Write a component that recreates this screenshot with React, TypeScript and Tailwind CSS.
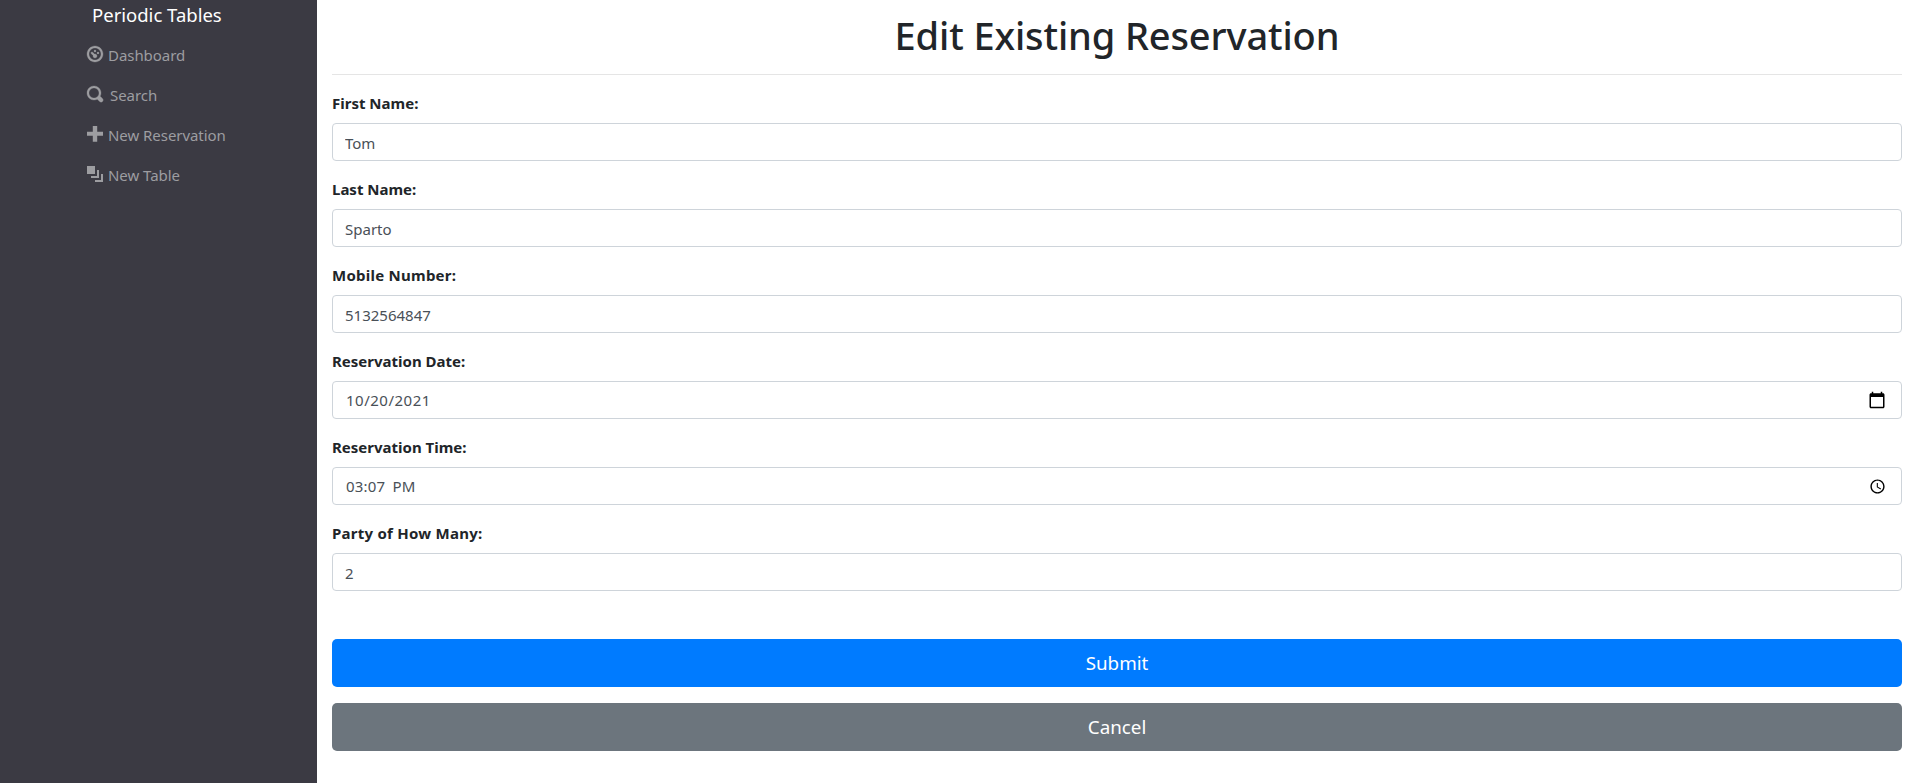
import React from "react";

const navItems = [
  {
    label: "Dashboard",
    gap: "gap-[5px]",
    stroke: "stroke-current [stroke-width:0.15]",
    path: "M4 0c-2.2 0-4 1.8-4 4s1.8 4 4 4 4-1.8 4-4-1.8-4-4-4zm0 1c1.66 0 3 1.34 3 3s-1.34 3-3 3-3-1.34-3-3 1.34-3 3-3zm0 1c-.28 0-.5.22-.5.5s.22.5.5.5.5-.22.5-.5-.22-.5-.5-.5zm-1.66 1a.5.5 0 0 0-.19.84l.91.91c-.02.08-.06.16-.06.25 0 .55.45 1 1 1s1-.45 1-1-.45-1-1-1c-.09 0-.17.04-.25.06l-.91-.91a.5.5 0 0 0-.44-.16.5.5 0 0 0-.06 0zm3.16 0c-.28 0-.5.22-.5.5s.22.5.5.5.5-.22.5-.5-.22-.5-.5-.5z",
  },
  {
    label: "Search",
    gap: "gap-[7px]",
    stroke: "stroke-current [stroke-width:0.15]",
    path: "M3.5 0c-1.93 0-3.5 1.57-3.5 3.5s1.57 3.5 3.5 3.5c.59 0 1.17-.14 1.66-.41a1 1 0 0 0 .13.13l1 1a1.02 1.02 0 1 0 1.44-1.44l-1-1a1 1 0 0 0-.16-.13c.27-.49.44-1.06.44-1.66 0-1.93-1.55-3.5-3.5-3.5zm0 1c1.39 0 2.5 1.11 2.5 2.5 0 .66-.24 1.27-.66 1.72-.01.01-.02.02-.03.03a1 1 0 0 0-.13.13c-.44.4-1.04.63-1.69.63-1.39 0-2.5-1.11-2.5-2.5s1.11-2.5 2.5-2.5z",
  },
  {
    label: "New Reservation",
    gap: "gap-[5px]",
    stroke: "",
    path: "M2.9 0v2.9h-2.9v2h2.9v3h2.2v-3h2.9v-2h-2.9v-2.9h-2.2z",
  },
  {
    label: "New Table",
    gap: "gap-[5px]",
    stroke: "",
    path: "M0 0v4h4v-4h-4zm5 2v3h-3v1h4v-4h-1zm2 2v3h-3v1h4v-4h-1z",
  },
];

function CalendarIcon() {
  return (
    <svg viewBox="0 0 24 24" className="mb-px size-[18px] shrink-0 fill-black">
      <path d="M20 3h-1V1h-2v2H7V1H5v2H4c-1.1 0-2 .9-2 2v16c0 1.1.9 2 2 2h16c1.1 0 2-.9 2-2V5c0-1.1-.9-2-2-2zm0 18H4V8h16v13z" />
    </svg>
  );
}

function ClockIcon() {
  return (
    <svg viewBox="0 0 24 24" className="size-[17px] shrink-0 fill-black">
      <path d="M11.99 2C6.47 2 2 6.48 2 12s4.47 10 9.99 10C17.52 22 22 17.52 22 12S17.52 2 11.99 2zM12 20c-4.42 0-8-3.58-8-8s3.58-8 8-8 8 3.58 8 8-3.58 8-8 8z" />
      <path d="M12.5 7H11v6l5.25 3.15.75-1.23-4.5-2.67z" />
    </svg>
  );
}

interface FieldProps {
  id: string;
  label: string;
  labelClass?: string;
  value: string;
  inputClass?: string;
  icon?: React.ReactNode;
}

function Field({
  id,
  label,
  labelClass = "",
  value,
  inputClass = "pt-[2px] pl-3",
  icon,
}: FieldProps) {
  return (
    <div className="mb-4 flex flex-col">
      <label htmlFor={id} className={`mb-2 text-[15px] leading-6 font-bold ${labelClass}`}>
        {label}
      </label>
      <div className="flex h-[38px] items-center rounded border border-[#ced4da] bg-white pr-[15px]">
        <input
          id={id}
          type="text"
          defaultValue={value}
          className={`h-full min-w-0 flex-1 bg-transparent text-[15px] text-[#495057] outline-none ${inputClass}`}
        />
        {icon}
      </div>
    </div>
  );
}

export default function App() {
  return (
    <div className="flex h-[783px] overflow-hidden bg-white font-['Noto_Sans','Open_Sans',sans-serif] text-[#212529]">
      <nav className="w-[317px] shrink-0 bg-[#3b3a43]">
        <div className="pl-[92px] text-[18.5px] leading-[30px] text-white">Periodic Tables</div>
        <ul className="mt-[5px] pl-[87px]">
          {navItems.map((item) => (
            <li key={item.label} className="h-10 pt-2">
              <a
                href="#"
                className={`flex h-6 items-start text-[15px] leading-6 tracking-[-0.05px] text-[#9d9da1] ${item.gap}`}
              >
                <svg
                  viewBox="0 0 8 8"
                  className={`mt-[3px] size-4 shrink-0 overflow-visible fill-current ${item.stroke}`}
                >
                  <path d={item.path} />
                </svg>
                {item.label}
              </a>
            </li>
          ))}
        </ul>
      </nav>
      <main className="flex-1 pr-3 pl-[15px]">
        <h1 className="pt-[11px] text-center text-[38px] leading-[48px] font-medium tracking-[-0.12px]">
          Edit Existing Reservation
        </h1>
        <hr className="mt-[15px] mb-4 border-t border-[#e5e5e5]" />
        <form className="flex flex-col">
          <Field id="first_name" label="First Name:" value="Tom" />
          <Field id="last_name" label="Last Name:" value="Sparto" />
          <Field
            id="mobile_number"
            label="Mobile Number:"
            labelClass="tracking-[0.25px]"
            value="5132564847"
          />
          <Field
            id="reservation_date"
            label="Reservation Date:"
            value="10/20/2021"
            inputClass="pl-[13px] tracking-[0.5px]"
            icon={<CalendarIcon />}
          />
          <Field
            id="reservation_time"
            label="Reservation Time:"
            value="03:07 PM"
            inputClass="pl-[13px] tracking-[0.2px] [word-spacing:3px]"
            icon={<ClockIcon />}
          />
          <Field
            id="people"
            label="Party of How Many:"
            labelClass="tracking-[0.25px]"
            value="2"
          />
          <button
            type="button"
            className="mt-8 h-12 rounded-[5px] bg-[#007bff] pt-px text-[18.8px] text-white"
          >
            Submit
          </button>
          <button
            type="button"
            className="mt-4 h-12 rounded-[5px] bg-[#6c757d] pt-px text-[18.8px] text-white"
          >
            Cancel
          </button>
        </form>
      </main>
    </div>
  );
}
